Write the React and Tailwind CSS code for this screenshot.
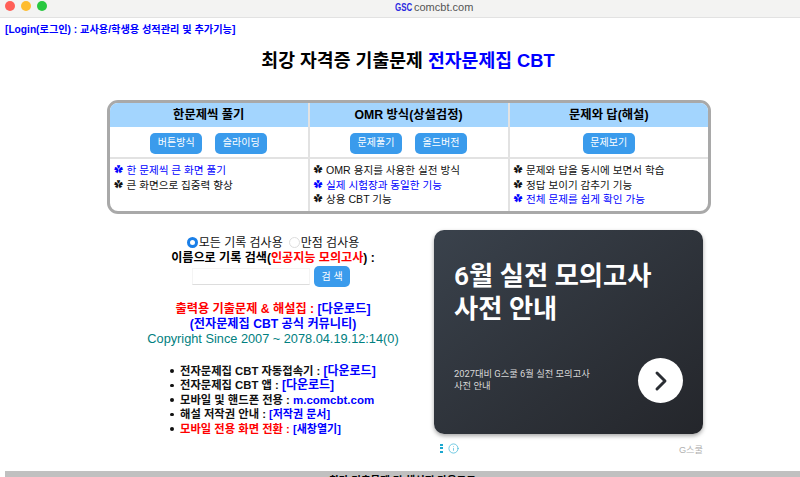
import React from "react";
import { ChevronRight, Info } from "lucide-react";

const fontStack = "font-['Liberation_Sans','Noto_Sans_CJK_KR',sans-serif]";

const columns = [
  {
    title: "한문제씩 풀기",
    buttons: ["버튼방식", "슬라이딩"],
    items: [
      { text: "한 문제씩 큰 화면 풀기", blue: true },
      { text: "큰 화면으로 집중력 향상" },
    ],
  },
  {
    title: "OMR 방식(상설검정)",
    buttons: ["문제풀기", "올드버전"],
    items: [
      { text: "OMR 용지를 사용한 실전 방식" },
      { text: "실제 시험장과 동일한 기능", blue: true },
      { text: "상용 CBT 기능" },
    ],
  },
  {
    title: "문제와 답(해설)",
    buttons: ["문제보기"],
    items: [
      { text: "문제와 답을 동시에 보면서 학습" },
      { text: "정답 보이기 감추기 기능" },
      { text: "전체 문제를 쉽게 확인 가능", blue: true },
    ],
  },
];

const TitleBar = () => (
  <div className="h-[18px] bg-[#f3f3f2] border-b border-[#e2e2e2] flex items-start pt-px relative">
    <div className="flex gap-[6px] pl-[5px]">
      <span className="w-[10px] h-[10px] rounded-full bg-[#ff5f57]" />
      <span className="w-[10px] h-[10px] rounded-full bg-[#febc2e]" />
      <span className="w-[10px] h-[10px] rounded-full bg-[#28c840]" />
    </div>
    <div className="absolute left-[395px] top-0 h-[15px] flex items-center">
      <span className="w-[19px] text-[11px] font-bold leading-none text-[#2a2ae0] origin-left scale-x-[0.72]">GSC</span>
      <span className="text-[11px] text-[#555]">comcbt.com</span>
    </div>
  </div>
);

const ActionButton = ({ label }) => (
  <button className="h-[21px] w-[52px] rounded-[5px] bg-[#3a9bec] text-white text-[10px] leading-none">
    {label}
  </button>
);

const FeatureTable = () => (
  <div className="mt-[26px] ml-[107px] w-[604px] h-[114px] border-[3px] border-[#a9a9a9] rounded-[11px] overflow-hidden grid grid-cols-[197.5px_200px_1fr]">
    {columns.map((col, i) => (
      <div key={col.title} className={`flex flex-col ${i > 0 ? "border-l-2 border-[#e2e2e2]" : ""}`}>
        <div className="h-[24px] bg-[#a3d5fe] flex items-center justify-center text-[12.3px] font-bold text-black">
          {col.title}
        </div>
        <div className="h-[32px] pt-[2px] flex items-center justify-center gap-[13px] border-b-2 border-[#e2e2e2]">
          {col.buttons.map((b) => (
            <ActionButton key={b} label={b} />
          ))}
        </div>
        <ul className="pt-[4px] pl-[4px] text-[10.6px] leading-[14.5px]">
          {col.items.map((item) => (
            <li key={item.text} className={`flex items-center ${item.blue ? "text-[#0000ff]" : "text-[#111]"}`}>
              <span className="w-[12.5px] text-[9px]">✿</span>
              {item.text}
            </li>
          ))}
        </ul>
      </div>
    ))}
  </div>
);

const LinkRow = ({ children }) => (
  <li className="flex items-center">
    <span className="w-[3.5px] h-[3.5px] rounded-full bg-[#111] mr-[6.5px]" />
    <div>{children}</div>
  </li>
);

const LeftColumn = () => (
  <div className="w-[268px] ml-[139px] mt-[5px] flex flex-col items-center text-black">
    <div className="h-[15px] flex items-center text-[12px] leading-none text-[#111]">
      <span className="w-[11px] h-[11px] rounded-full border-[3px] border-[#1a7fe8] bg-white mr-px" />
      <span>모든 기록 검사용</span>
      <span className="w-[11px] h-[11px] rounded-full border border-[#ddd] bg-white ml-[6px] mr-px" />
      <span>만점 검사용</span>
    </div>
    <div className="h-[15px] mt-px text-[12.1px] leading-[15px] font-bold">
      이름으로 기록 검색(<span className="text-[#ff0000]">인공지능 모의고사</span>) :
    </div>
    <div className="flex items-center gap-[4px] mr-[4px]">
      <div className="w-[118px] h-[17px] border-b border-[#ddd] border-x border-x-[#f4f4f4] border-t border-t-[#f4f4f4]" />
      <button className="w-[36px] h-[21px] rounded-[5px] bg-[#3a9bec] text-white text-[10px] leading-none">
        검 색
      </button>
    </div>
    <div className="mt-[15px] text-[12.2px] leading-[15px] font-bold text-center">
      <div className="text-[#ff0000]">
        출력용 기출문제 &amp; 해설집 : <span className="text-[#0000ff]">[다운로드]</span>
      </div>
      <div className="text-[#0000ff]">(전자문제집 CBT 공식 커뮤니티)</div>
    </div>
    <div className="text-[12.75px] leading-[14px] text-[#008080]">Copyright Since 2007 ~ 2078.04.19.12:14(0)</div>
    <ul className="mt-[18px] self-start ml-[31px] text-[11.3px] leading-[14.4px] font-bold text-[#111]">
      <LinkRow>
        전자문제집 CBT 자동접속기 : <span className="text-[#0000ff] text-[12px]">[다운로드]</span>
      </LinkRow>
      <LinkRow>
        전자문제집 CBT 앱 : <span className="text-[#0000ff] text-[12px]">[다운로드]</span>
      </LinkRow>
      <LinkRow>
        모바일 및 핸드폰 전용 : <span className="text-[#0000ff] text-[11.5px]">m.comcbt.com</span>
      </LinkRow>
      <LinkRow>
        해설 저작권 안내 : <span className="text-[#0000ff] text-[11px]">[저작권 문서]</span>
      </LinkRow>
      <LinkRow>
        <span className="text-[#ff0000]">모바일 전용 화면 전환 :</span> <span className="text-[#0000ff] text-[11px]">[새창열기]</span>
      </LinkRow>
    </ul>
  </div>
);

const AdCard = () => (
  <div className="w-[269px] ml-[27px]">
    <div className="h-[204px] rounded-[10px] bg-gradient-to-br from-[#3a424c] to-[#24262b] shadow-[0_2px_4px_rgba(0,0,0,0.35)] px-[20px] flex flex-col justify-between">
      <div className="mt-[30px] text-[26.3px] leading-[33px] font-semibold text-white font-['Roboto','Noto_Sans_CJK_KR',sans-serif]">
        6월 실전 모의고사
        <br />
        사전 안내
      </div>
      <div className="flex items-center justify-between mb-[31px]">
        <div className="mb-[2px] text-[9.3px] leading-[12px] text-[#d8d8d8] font-['Roboto','Noto_Sans_CJK_KR',sans-serif]">
          2027대비 G스쿨 6월 실전 모의고사
          <br />
          사전 안내
        </div>
        <div className="w-[45px] h-[45px] rounded-full bg-white flex items-center justify-center">
          <ChevronRight size={32} strokeWidth={2.2} className="text-[#2a2d33]" />
        </div>
      </div>
    </div>
    <div className="mt-[5px] flex items-center pl-[6px]">
      <div className="flex flex-col gap-[1.5px]">
        <span className="w-[2.5px] h-[2px] bg-[#1ba8d0]" />
        <span className="w-[2.5px] h-[2px] bg-[#1ba8d0]" />
        <span className="w-[2.5px] h-[2px] bg-[#1ba8d0]" />
      </div>
      <Info size={11} strokeWidth={1.5} className="text-[#35b3d6] ml-[5px]" />
      <span className="ml-auto mt-[5px] text-[9.2px] text-[#b0b0b0]">G스쿨</span>
    </div>
  </div>
);

export default function App() {
  return (
    <div className={`w-[800px] h-[477px] overflow-hidden bg-white relative ${fontStack}`}>
      <TitleBar />
      <div className="pl-[5px] pt-[5px] text-[10.2px] leading-[14px] font-bold text-[#0000ff]">
        [Login(로그인) : 교사용/학생용 성적관리 및 추가기능]
      </div>
      <h1 className="mt-[11px] text-center text-[18.3px] leading-[26px] font-bold text-black ml-[16px]">
        최강 자격증 기출문제 <span className="text-[#0000ff]">전자문제집 CBT</span>
      </h1>
      <FeatureTable />
      <div className="mt-[16px] flex items-start">
        <LeftColumn />
        <AdCard />
      </div>
      <div className="absolute left-[5px] right-0 top-[471px] h-[12px] bg-[#c0c0c0] pt-[2px] text-center text-[10.5px] leading-[14px] font-bold text-black">
        최다 기출문제 및 해설집 다운로드
      </div>
    </div>
  );
}
